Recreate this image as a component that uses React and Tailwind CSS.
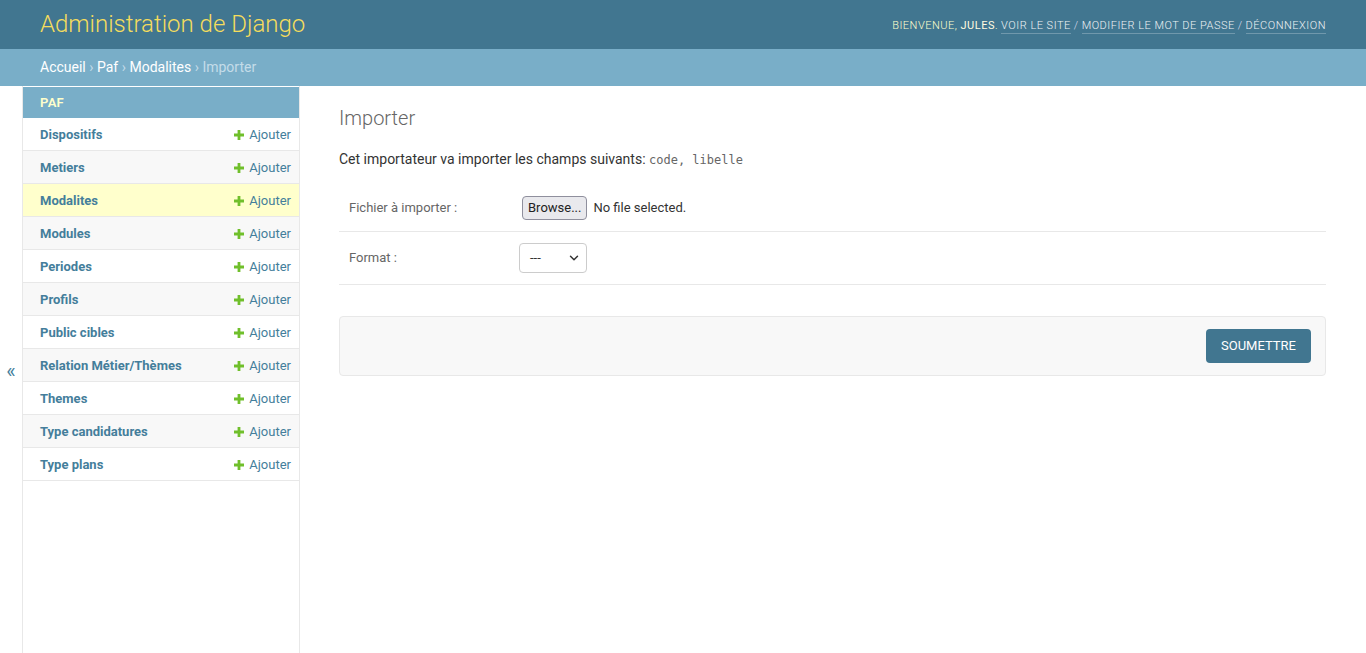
import { ChevronDown } from 'lucide-react';

const models = [
    { name: 'Dispositifs' },
    { name: 'Metiers' },
    { name: 'Modalites', current: true },
    { name: 'Modules' },
    { name: 'Periodes' },
    { name: 'Profils' },
    { name: 'Public cibles' },
    { name: 'Relation Métier/Thèmes' },
    { name: 'Themes' },
    { name: 'Type candidatures' },
    { name: 'Type plans' },
];

function Plus() {
    return (
        <svg width="10" height="10" viewBox="0 0 10 10" className="mr-[5px]">
            <path d="M3.6 0h2.8v3.6H10v2.8H6.4V10H3.6V6.4H0V3.6h3.6z" fill="#70bf2b" />
        </svg>
    );
}

export default function App() {
    return (
        <div className="min-h-screen bg-white text-[#333] font-['Roboto',sans-serif]">
            {/* Header */}
            <div className="h-[49px] bg-[#417690] flex items-center justify-between px-10">
                <h1 className="text-[24px] font-light text-[#f5dd5d] leading-none -mt-[1px]">Administration de Django</h1>
                <div className="text-[11px] tracking-[0.5px] uppercase font-light text-[#ffc] flex items-center gap-[3px] mt-[3px]">
                    <span>
                        Bienvenue, <span className="font-normal text-[#fffbe0]">Jules</span>.
                    </span>
                    <a className="text-[#eef2f4] border-b border-white/25 leading-[15px]">Voir le site</a>
                    <span className="text-[#dde]">/</span>
                    <a className="text-[#eef2f4] border-b border-white/25 leading-[15px]">Modifier le mot de passe</a>
                    <span className="text-[#dde]">/</span>
                    <a className="text-[#eef2f4] border-b border-white/25 leading-[15px]">Déconnexion</a>
                </div>
            </div>

            {/* Breadcrumbs */}
            <div className="h-[37px] bg-[#79aec8] px-10 flex items-center text-[14px] text-[#c4dce8]">
                <a className="text-white">Accueil</a>
                <span className="mx-[3.5px]">›</span>
                <a className="text-white">Paf</a>
                <span className="mx-[3.5px]">›</span>
                <a className="text-white">Modalites</a>
                <span className="mx-[3.5px]">›</span>
                <span>Importer</span>
            </div>

            {/* Main */}
            <div className="flex min-h-[calc(100vh-86px)]">
                <button className="w-[23px] shrink-0 border-r border-[#e8e8e8] flex items-center justify-center text-[20px] text-[#447e9b] pt-[2px]">
                    «
                </button>

                <nav className="w-[277px] shrink-0 border-r border-[#e8e8e8] pt-[1px]">
                    <div className="h-[31px] bg-[#79aec8] pl-[17px] flex items-center text-[13px] font-semibold tracking-[0.3px] text-[#ffc]">
                        PAF
                    </div>
                    {models.map((m, i) => (
                        <div
                            key={m.name}
                            className={
                                'h-[33px] border-b border-[#e8e8e8] flex items-center justify-between pl-[17px] pr-2 pt-[2px] text-[13px] ' +
                                (m.current ? 'bg-[#ffc]' : i % 2 === 1 ? 'bg-[#f8f8f8]' : 'bg-white')
                            }
                        >
                            <a className="font-bold text-[#447e9b]">{m.name}</a>
                            <a className="flex items-center text-[#447e9b]">
                                <Plus />
                                Ajouter
                            </a>
                        </div>
                    ))}
                </nav>

                {/* Content */}
                <div className="flex-1 pl-[39px] pr-10 pt-[20px]">
                    <h1 className="text-[20px] font-light text-[#666] leading-[24px] mb-[19px]">Importer</h1>
                    <p className="text-[14px] text-[#333] mb-[16px]">
                        Cet importateur va importer les champs suivants:{' '}
                        <code className="font-['DejaVu_Sans_Mono',monospace] text-[12px] text-[#666]">code, libelle</code>
                    </p>

                    <div className="flex items-center h-[46px] border-b border-[#e8e8e8] px-[10px] pb-[1px]">
                        <label className="w-[173px] text-[13px] text-[#666]">Fichier à importer :</label>
                        <div className="flex items-center gap-[6px] text-[13px] text-[#333]">
                            <button className="h-[24px] px-[5px] border border-[#8f8f9d] bg-[#e9e9ed] rounded-[4px] text-[13px] text-[#222]">
                                Browse...
                            </button>
                            <span>No file selected.</span>
                        </div>
                    </div>

                    <div className="flex items-center h-[53px] border-b border-[#e8e8e8] px-[10px]">
                        <label className="w-[170px] text-[13px] text-[#666]">Format :</label>
                        <div className="w-[68px] h-[30px] border border-[#ccc] rounded-[4px] flex items-center justify-between pl-[10px] pr-[5px] text-[13px] text-[#333]">
                            <span>---</span>
                            <ChevronDown size={14} strokeWidth={2.5} className="text-[#333]" />
                        </div>
                    </div>

                    <div className="mt-[31px] h-[60px] bg-[#f8f8f8] border border-[#e8e8e8] rounded-[4px] flex items-center justify-end px-[14px]">
                        <button className="h-[34px] px-[15px] bg-[#417690] rounded-[4px] text-white text-[13px] uppercase">
                            Soumettre
                        </button>
                    </div>
                </div>
            </div>
        </div>
    );
}
